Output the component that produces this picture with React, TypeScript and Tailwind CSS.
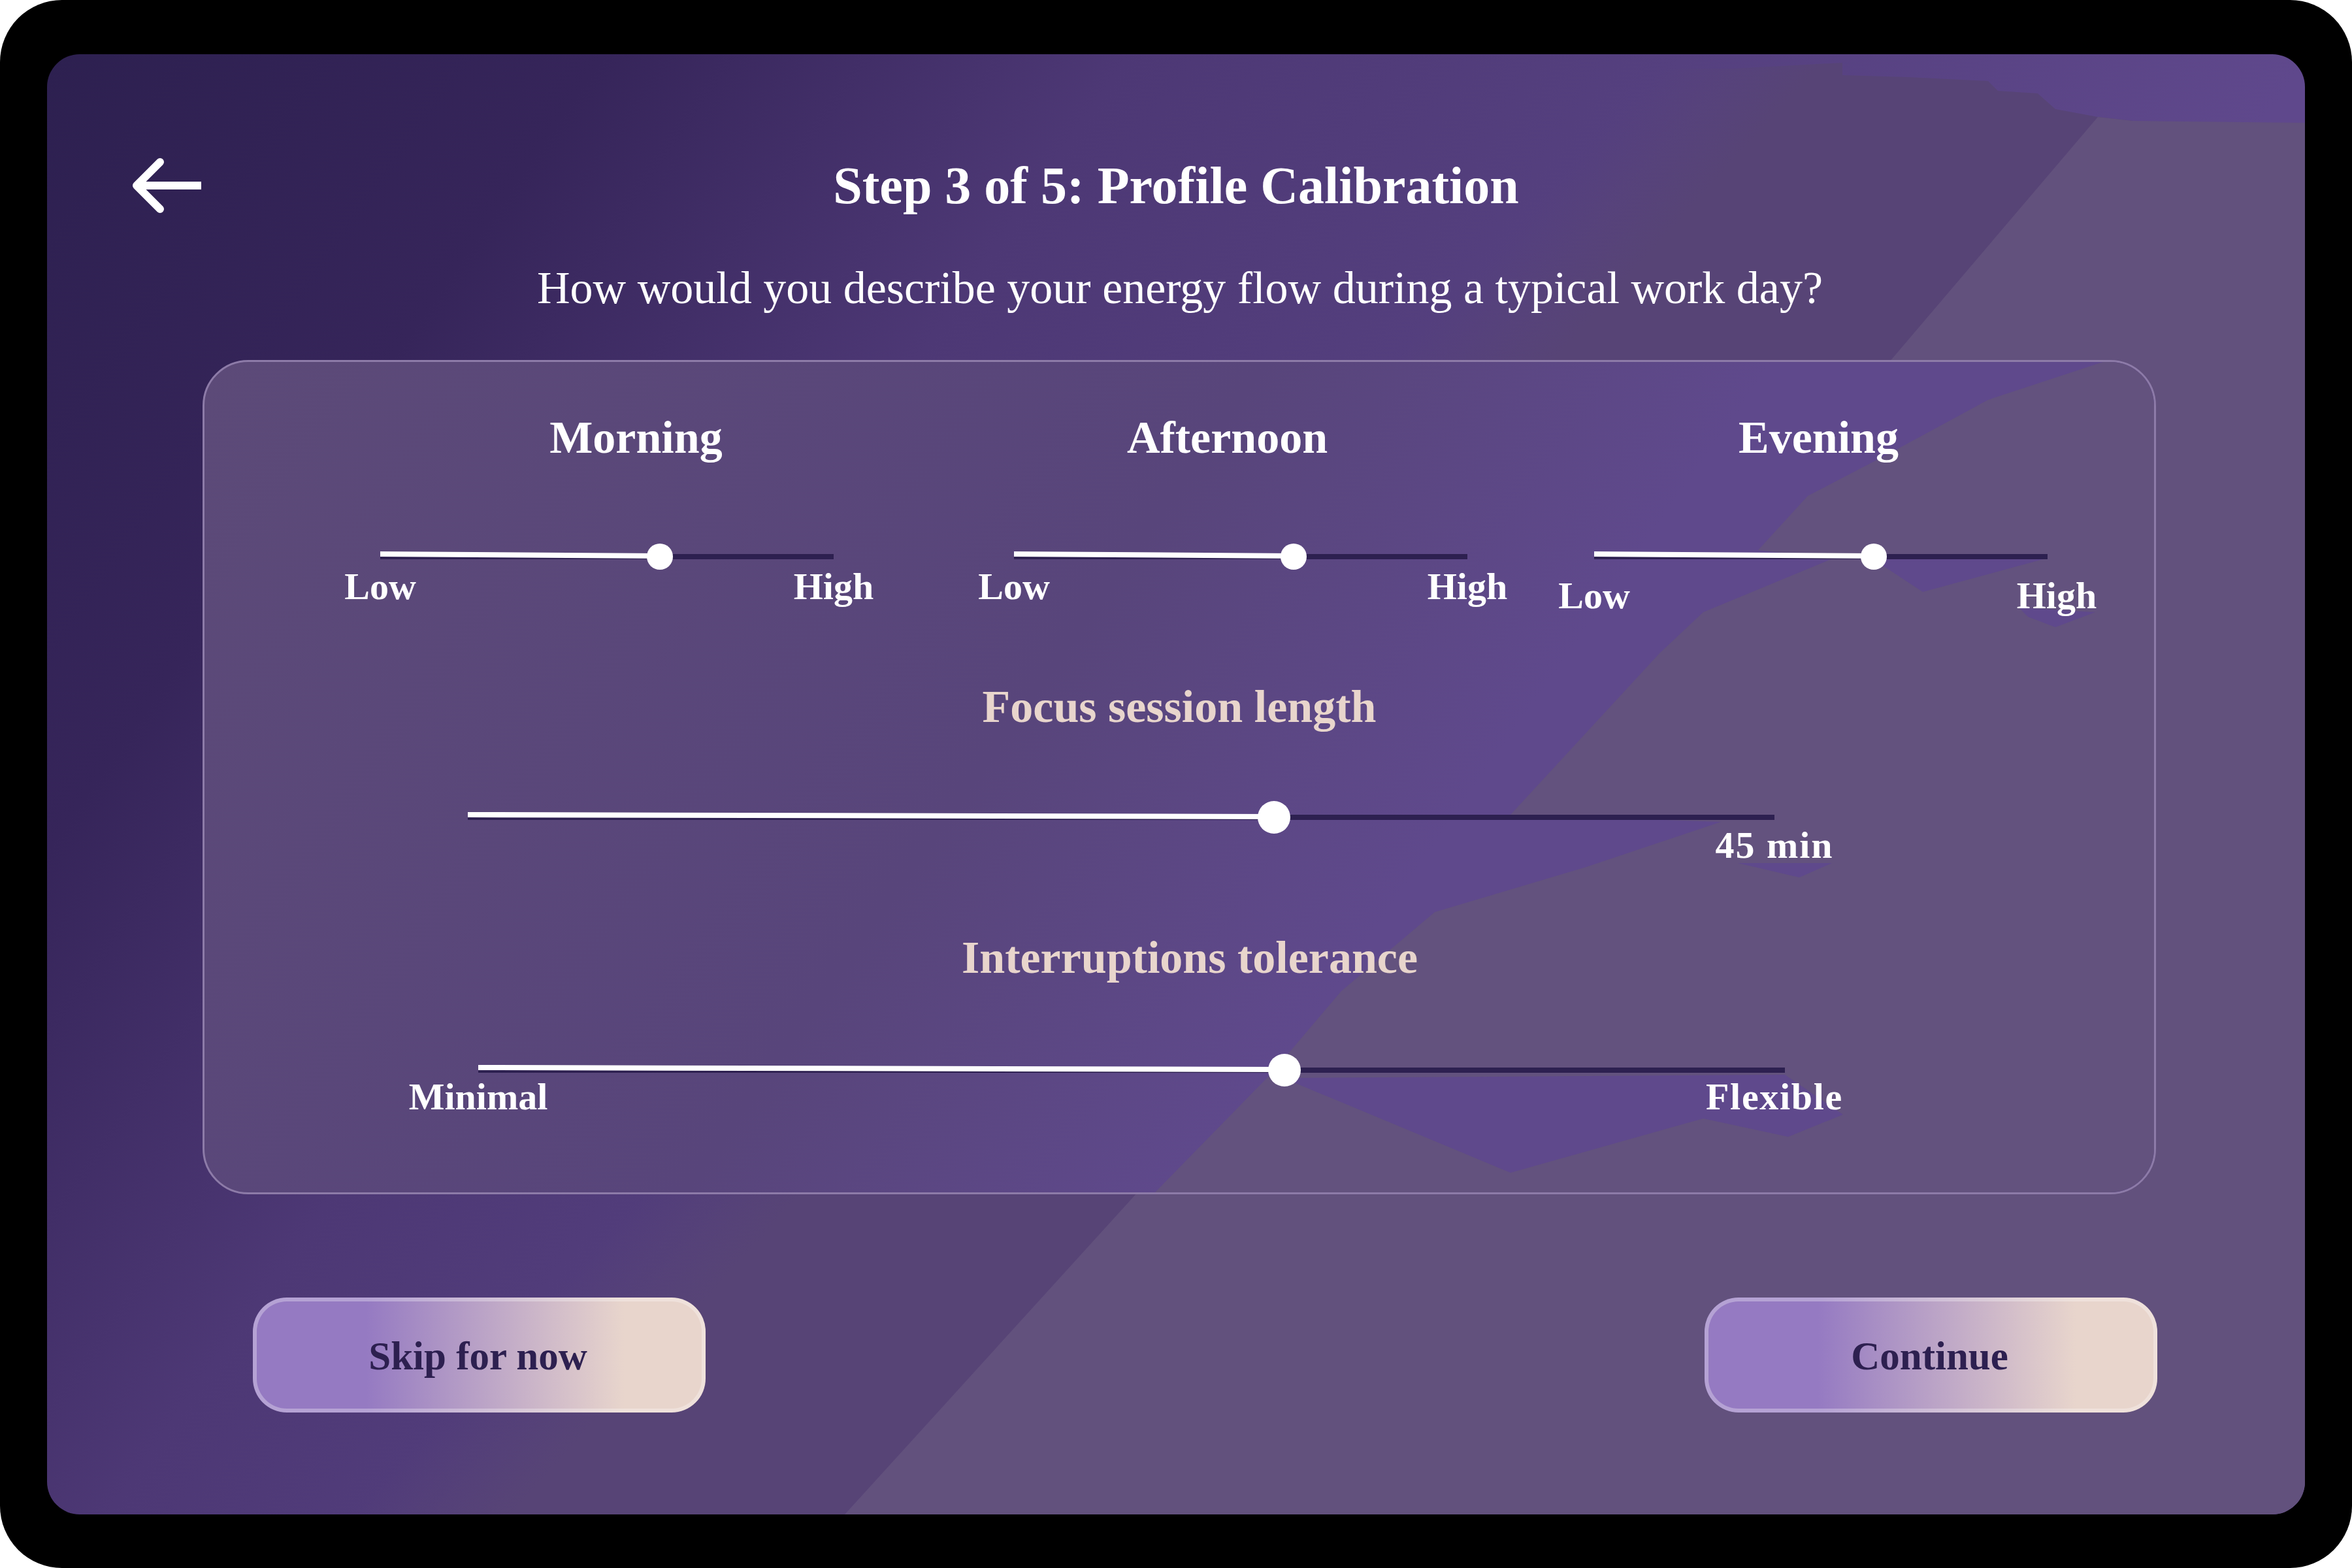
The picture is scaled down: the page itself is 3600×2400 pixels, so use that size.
const serif = "font-['Liberation_Serif',serif]";

// thin slanted white fill + thumb on a dark track
const Slider = ({ width, thumb }: { width: string; thumb: string }) => (
  <div className={`relative h-[8px] bg-[#2d2050] ${width}`}>
    <div className="absolute left-0 top-[-4px] h-[11px] w-[61.7%] bg-white [clip-path:polygon(0_0,100%_27%,100%_100%,0_73%)]" />
    <div className={`absolute left-[61.7%] top-1/2 -translate-x-1/2 -translate-y-1/2 rounded-full bg-white ${thumb}`} />
  </div>
);

const EdgeLabel = ({ text, tracking = "" }: { text: string; tracking?: string }) => (
  <div className="flex w-0 justify-center">
    <span className={`whitespace-nowrap text-[58px] font-bold leading-none text-white ${tracking}`}>{text}</span>
  </div>
);

const DaySlider = ({ labelRow }: { labelRow: string }) => (
  <div className="w-[694px]">
    <Slider width="w-[694px]" thumb="h-[40px] w-[40px]" />
    <div className={`flex justify-between ${labelRow}`}>
      <EdgeLabel text="Low" />
      <EdgeLabel text="High" />
    </div>
  </div>
);

const GradientButton = ({ label }: { label: string }) => (
  <button className="flex h-[176px] w-[693px] items-center justify-center rounded-[52px] border-[6px] border-white/30 bg-[linear-gradient(90deg,#957ac2_25%,#e8d5cc_82%)] bg-origin-border pr-[4px] pt-[4px] text-[61px] font-bold text-[#2d2050]">
    {label}
  </button>
);

const CardBackdrop = () => (
  <svg className="absolute inset-0 h-full w-full" viewBox="72 83 3456 2235" preserveAspectRatio="none">
    <defs>
      {/* soft left edge of the diagonal band */}
      <linearGradient id="band" gradientUnits="userSpaceOnUse" x1="1540" y1="1211" x2="1674" y2="1332">
        <stop offset="0" stopColor="#574476" stopOpacity="0" />
        <stop offset="1" stopColor="#574476" />
      </linearGradient>
    </defs>
    <polygon
      points="2652,105 2820,96 2820,115 2920,118 3043,124 3058,139 3119,143 3146,167 3211,179 3265,185 1293,2318 540,2318 2540,105"
      fill="url(#band)"
    />
    <polygon points="3211,179 3265,185 3528,188 3528,2318 1293,2318 1732,1835 2897,548" fill="#62517d" />
  </svg>
);

const PanelBackdrop = () => (
  <svg className="absolute inset-0 h-full w-full" viewBox="313 554 2984 1271" preserveAspectRatio="none">
    <polygon
      points="3219,554 3043,612 2890,695 2767,759 2691,842 2805,855 2607,937 2540,1000 2312,1247 2634,1258 2428,1327 2196,1396 2053,1517 1946,1643 1768,1825 3297,1825 3297,554"
      fill="#63527e"
    />
    <polygon points="1964,1650 2732,1645 2821,1706 2737,1740 2607,1712 2312,1795" fill="#5f498c" />
    <polygon points="2867,856 3127,856 2943,906" fill="#5f498c" />
    <polygon points="3090,930 3207,937 3146,960 3104,944" fill="#5f498c" />
    <polygon points="2660,1321 2804,1321 2754,1343" fill="#5f498c" />
  </svg>
);

export default function App() {
  return (
    <div className={`h-[2400px] w-[3600px] bg-white ${serif}`}>
      <div className="h-full rounded-[95px] bg-black pl-[72px] pt-[83px]">
        <div className="relative h-[2235px] w-[3456px] overflow-hidden rounded-[50px] bg-[linear-gradient(125deg,#2d2050_0%,#36255a_17%,#4d3875_33%,#55407f_50%,#5f488c_69%)]">
          <CardBackdrop />
          <div className="relative">
            <div className="grid grid-cols-[1fr_auto_1fr] items-center pt-[153px]">
              <div className="pl-[128px]">
                <svg className="h-[96px] w-[108px]" viewBox="0 0 108 96" fill="none" stroke="white" strokeWidth="12">
                  <path d="M108 48H9" />
                  <path d="M45 12 9 48l36 36" strokeLinecap="round" strokeLinejoin="round" />
                </svg>
              </div>
              <h1 className="text-[80px] font-bold leading-none text-white">Step 3 of 5: Profile Calibration</h1>
              <div />
            </div>

            <p className="mt-[74px] pl-[12px] text-center text-[70px] leading-none text-white">
              How would you describe your energy flow during a typical work day?
            </p>

            <div className="relative ml-[238px] mt-[75px] h-[1277px] w-[2990px] overflow-hidden rounded-[70px] border-[3px] border-[#8d7ba8] bg-[linear-gradient(125deg,#5c4a78_0%,#58457b_42%,#5f498c_62%)]">
              <PanelBackdrop />
              <div className="relative">
                <div className="grid grid-cols-[905px_905px_905px] pl-[208px] pt-[81px] text-center text-[70px] font-bold leading-none text-white">
                  <span>Morning</span>
                  <span>Afternoon</span>
                  <span>Evening</span>
                </div>

                <div className="mt-[143px] flex items-start pl-[269px]">
                  <DaySlider labelRow="mt-[13px]" />
                  <div className="ml-[276px]">
                    <DaySlider labelRow="mt-[13px]" />
                  </div>
                  <div className="ml-[194px]">
                    <DaySlider labelRow="mt-[27px] -mr-[14px]" />
                  </div>
                </div>

                <p className="mt-[106px] text-center text-[70px] font-bold leading-none text-[#e8d5cc]">Focus session length</p>
                <div className="ml-[403px] mt-[130px] w-[2000px]">
                  <Slider width="w-[2000px]" thumb="h-[50px] w-[50px]" />
                  <div className="flex justify-end pt-[10px]">
                    <EdgeLabel text="45 min" tracking="tracking-[2px]" />
                  </div>
                </div>

                <p className="mt-[108px] pl-[32px] text-center text-[70px] font-bold leading-none text-[#e8d5cc]">Interruptions tolerance</p>
                <div className="ml-[419px] mt-[133px] w-[2000px]">
                  <Slider width="w-[2000px]" thumb="h-[50px] w-[50px]" />
                  <div className="flex justify-between pr-[16px] pt-[8px]">
                    <EdgeLabel text="Minimal" />
                    <EdgeLabel text="Flexible" tracking="tracking-[1.7px]" />
                  </div>
                </div>
              </div>
            </div>

            <div className="ml-[315px] mr-[226px] mt-[158px] flex justify-between">
              <GradientButton label="Skip for now" />
              <GradientButton label="Continue" />
            </div>
          </div>
        </div>
      </div>
    </div>
  );
}
